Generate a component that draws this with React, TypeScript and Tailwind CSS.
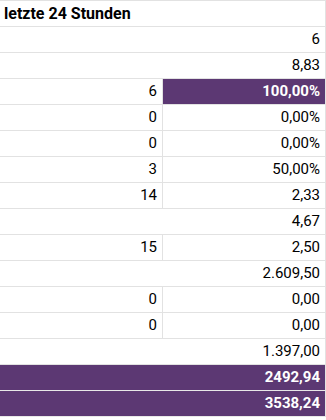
const rows: { left?: string; right: string; hi?: boolean; full?: boolean }[] = [
  { right: "6", full: true },
  { right: "8,83", full: true },
  { left: "6", right: "100,00%", hi: true },
  { left: "0", right: "0,00%" },
  { left: "0", right: "0,00%" },
  { left: "3", right: "50,00%" },
  { left: "14", right: "2,33" },
  { right: "4,67", full: true },
  { left: "15", right: "2,50" },
  { right: "2.609,50", full: true },
  { left: "0", right: "0,00" },
  { left: "0", right: "0,00" },
  { right: "1.397,00", full: true },
]

const totals = ["2492,94", "3538,24"]

export default function App() {
  return (
    <div className="h-[420px] w-[326px] overflow-hidden bg-white font-['Roboto',sans-serif] text-[15px] text-black">
      <div className="border-t border-r border-[#e2e2e2]">
        <div className="flex h-[26px] items-center border-b border-[#e2e2e2] px-[4px] text-[16px] font-bold">
          letzte 24 Stunden
        </div>

        {rows.map((row, i) =>
          row.full ? (
            <div key={i} className="flex h-[26px] items-center justify-end border-b border-[#e2e2e2] pr-[5px]">
              {row.right}
            </div>
          ) : (
            <div key={i} className="flex h-[26px] border-b border-[#e2e2e2]">
              <div className="flex w-[163px] shrink-0 items-center justify-end border-r border-[#e2e2e2] pr-[5px]">
                {row.left}
              </div>
              <div
                className={
                  row.hi
                    ? "flex flex-1 items-center justify-end bg-[#5c3873] pr-[5px] font-bold text-white"
                    : "flex flex-1 items-center justify-end pr-[5px]"
                }
              >
                {row.right}
              </div>
            </div>
          )
        )}

        {totals.map((t) => (
          <div
            key={t}
            className="flex h-[26px] items-center justify-end border-b border-[#e8e8e8] bg-[#5c3873] pr-[5px] font-bold text-white"
          >
            {t}
          </div>
        ))}
      </div>
    </div>
  )
}
